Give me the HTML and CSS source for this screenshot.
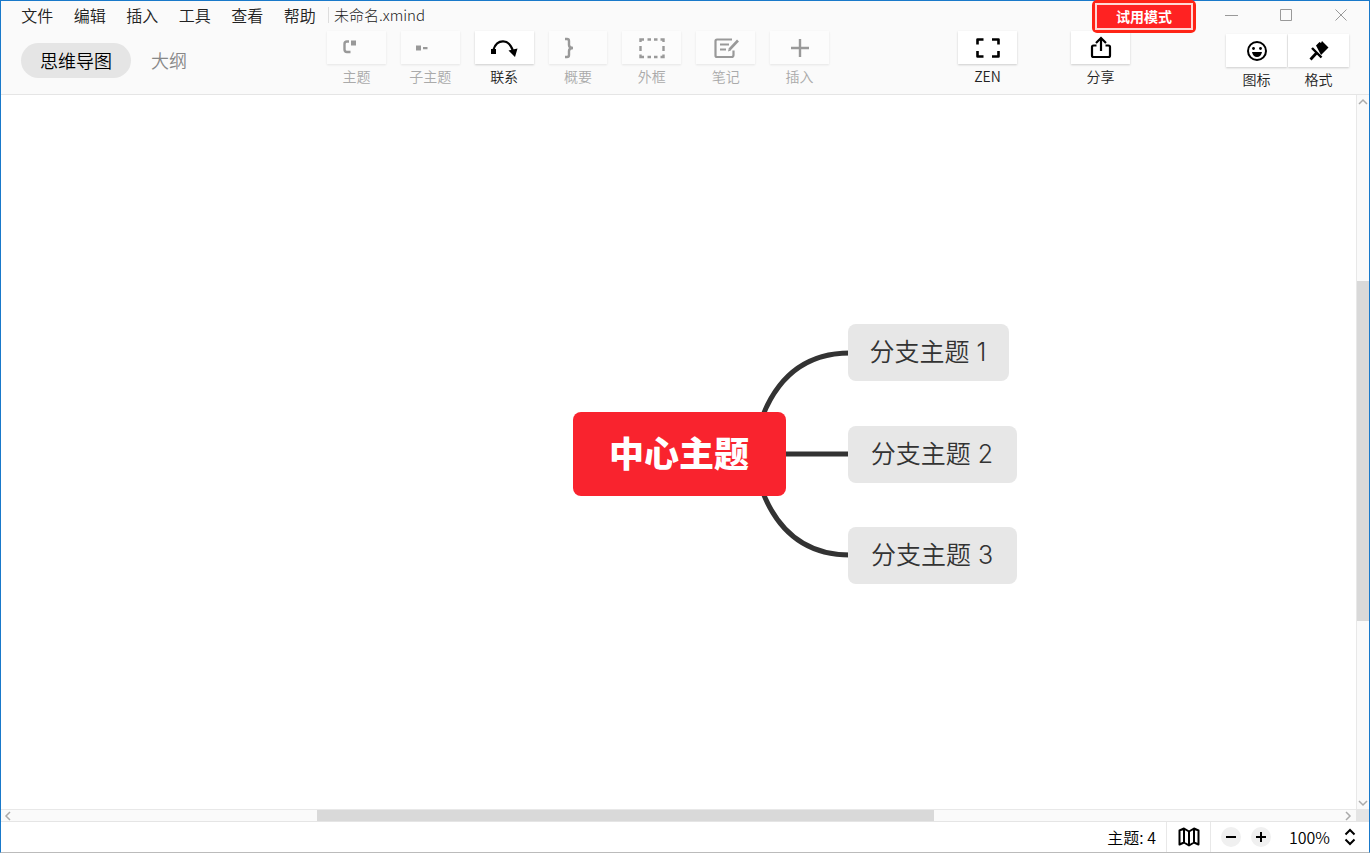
FILE: index.html
```html
<!DOCTYPE html>
<html lang="zh-CN">
<head>
<meta charset="utf-8">
<title>未命名.xmind</title>
<link rel="stylesheet" href="styles.css">
</head>
<body>
<div class="window">
  <header class="header">
    <div class="titlebar">
      <nav class="menu">
        <button>文件</button><button>编辑</button><button>插入</button><button>工具</button><button>查看</button><button>帮助</button>
      </nav>
      <span class="filename">未命名.xmind</span>
      <button class="trial"><span>试用模式</span></button>
      <div class="controls">
        <button aria-label="最小化"><svg width="14" height="14" viewBox="0 0 14 14"><path d="M1 7.500h13"/></svg></button>
        <button aria-label="最大化"><svg width="14" height="14" viewBox="0 0 14 14"><path d="M1.500 1.500h11v11h-11z"/></svg></button>
        <button aria-label="关闭"><svg width="14" height="14" viewBox="0 0 14 14"><path d="M1.500 1.500l11 11M12.500 1.500l-11 11"/></svg></button>
      </div>
    </div>
    <div class="toolbar">
      <div class="tabs">
        <button class="tab active">思维导图</button>
        <button class="tab">大纲</button>
      </div>
      <div class="tools">
        <button class="tool" disabled><span class="face"><svg class="shifted" width="28" height="28" viewBox="0 0 28 28"><path d="M14 7.500h-2q-2.500 0-2.500 2.500v5.500q0 2.500 2.500 2.500h3.500" fill="none" stroke="currentColor" stroke-width="2.400"/><path d="M16 6.500h5v5h-5z" fill="currentColor"/></svg></span>主题</button>
        <button class="tool" disabled><span class="face"><svg class="shifted" width="28" height="28" viewBox="0 0 28 28"><path d="M7 11.500h5v5H7zM14 13h4.500v2.200H14z" fill="currentColor"/></svg></span>子主题</button>
        <button class="tool"><span class="face"><svg width="28" height="28" viewBox="0 0 28 28"><path d="M1 15h5v5H1zM18.500 16.500l9-2-2.500 8.500z" fill="currentColor"/><path d="M3.500 15.500C7 5 19 4 23 17" fill="none" stroke="currentColor" stroke-width="2.200"/></svg></span>联系</button>
        <button class="tool" disabled><span class="face"><svg class="shifted" width="28" height="28" viewBox="0 0 28 28"><path d="M8 5h2q2 0 2 2v4q0 3 4 3-4 0-4 3v4q0 2-2 2H8" fill="none" stroke="currentColor" stroke-width="2.400"/></svg></span>概要</button>
        <button class="tool" disabled><span class="face"><svg width="28" height="28" viewBox="0 0 28 28"><path d="M2.500 8V5.500H6M9.500 5.500h3.500M16 5.500h3.500M22.500 5.500h3V8M25.500 12v5M25.500 20.500V23h-3M19.500 23H16M13 23H9.500M6 23H2.500v-2.500M2.500 17v-5" fill="none" stroke="currentColor" stroke-width="2.400"/></svg></span>外框</button>
        <button class="tool" disabled><span class="face"><svg width="28" height="28" viewBox="0 0 28 28"><path d="M20 5.500H5q-1.500 0-1.500 1.500v14.500Q3.500 23 5 23h14.500q2 0 2-2v-4.500M8 10.500h9M8 15.500h6" fill="none" stroke="currentColor" stroke-width="2.200"/><path d="M17.500 15.500L26 6.500" stroke="currentColor" stroke-width="2.600"/><path d="M16 17.500l.8-3 2 2z" fill="currentColor"/></svg></span>笔记</button>
        <button class="tool" disabled><span class="face"><svg width="28" height="28" viewBox="0 0 28 28"><path d="M14 5v18M5 14h18" stroke="currentColor" stroke-width="2.400"/></svg></span>插入</button>
      </div>
      <div class="actions">
        <button class="tool"><span class="face"><svg width="28" height="28" viewBox="0 0 28 28"><path d="M3.500 10.500V5.500h6M18 5.500h6.500v5M24.500 17v5.500H18M9.500 22.500h-6V17" fill="none" stroke="currentColor" stroke-width="2.600" stroke-linejoin="round"/></svg></span>ZEN</button>
        <button class="tool"><span class="face"><svg width="28" height="28" viewBox="0 0 28 28"><path d="M9.500 11.500h-3q-1.500 0-1.500 1.500v8.500Q5 23 6.500 23h15q1.500 0 1.500-1.500V13q0-1.500-1.500-1.500h-3M14 17V5M9 9l5-5 5 5" fill="none" stroke="currentColor" stroke-width="2.200"/></svg></span>分享</button>
      </div>
      <div class="panels">
        <button class="tool"><span class="face"><svg width="28" height="28" viewBox="0 0 28 28"><circle cx="14" cy="14" r="9" fill="none" stroke="currentColor" stroke-width="2"/><circle cx="10.500" cy="11.500" r="1.400" fill="currentColor"/><circle cx="17.500" cy="11.500" r="1.400" fill="currentColor"/><path d="M9 15h10q-1 5-5 5t-5-5z" fill="currentColor"/></svg></span>图标</button>
        <button class="tool"><span class="face"><svg width="28" height="28" viewBox="0 0 28 28"><path d="M11 8.500l3.500-3.500 1.500 1 1-2 6.500 6.500-7.500 7.500z" fill="currentColor"/><path d="M7 11l9.500 9.500" stroke="currentColor" stroke-width="2.400"/><path d="M11.500 16l-6 6.500" stroke="currentColor" stroke-width="2.800"/></svg></span>格式</button>
      </div>
    </div>
  </header>

  <main class="canvas">
    <div class="map">
      <svg class="links" width="100" height="212" viewBox="0 0 100 212"><path d="M0 106H95M4 78C18 35 45 5 95 5M4 134C18 177 45 207 95 207" fill="none" stroke="#333" stroke-width="5"/></svg>
      <div class="node central">中心主题</div>
      <div class="node branch first">分支主题 1</div>
      <div class="node branch second">分支主题 2</div>
      <div class="node branch third">分支主题 3</div>
    </div>
  </main>
  <div class="scroll vertical">
    <svg width="10" height="12" viewBox="0 0 10 12"><path d="M1 9l4-4 4 4"/></svg>
    <div class="track"><div class="thumb"></div></div>
    <svg width="10" height="12" viewBox="0 0 10 12"><path d="M1 4l4 4 4-4"/></svg>
  </div>
  <div class="scroll horizontal">
    <svg width="14" height="10" viewBox="0 0 14 10"><path d="M9 1L5 5l4 4"/></svg>
    <div class="track"><div class="thumb"></div></div>
    <svg width="14" height="10" viewBox="0 0 14 10"><path d="M4 1l4 4-4 4"/></svg>
  </div>
  <div class="corner"></div>

  <footer class="status">
    <span class="count">主题: 4</span>
    <button class="overview" aria-label="导航图"><svg width="24" height="24" viewBox="0 0 24 24"><path d="M2.500 5.500L7 3.500l5 3 5-3 4.500 2v14L17 17.500l-5 3-5-3-4.500 2zM7 3.500v14M12 6.500v14M17 3.500v14" fill="none" stroke="#000" stroke-width="2" stroke-linejoin="round"/></svg></button>
    <button class="round" aria-label="缩小"><svg width="12" height="12" viewBox="0 0 12 12"><path d="M1 6h10" stroke="#000" stroke-width="2"/></svg></button>
    <button class="round" aria-label="放大"><svg width="12" height="12" viewBox="0 0 12 12"><path d="M1 6h10M6 1v10" stroke="#000" stroke-width="2"/></svg></button>
    <button class="zoom">100%<svg width="12" height="18" viewBox="0 0 12 18"><path d="M1.500 6.500L6 2l4.500 4.500M1.500 11.500L6 16l4.500-4.500" fill="none" stroke="#000" stroke-width="2"/></svg></button>
  </footer>
</div>
</body>
</html>
```
FILE: styles.css
```css
* { box-sizing: border-box; }

body {
  margin: 0;
  font-family: "Noto Sans CJK SC", sans-serif;
  font-weight: 350;
  color: #222;
}

button {
  margin: 0;
  padding: 0;
  border: 0;
  background: none;
  color: inherit;
  font: inherit;
}

svg { display: block; flex: none; }

.window {
  display: grid;
  grid-template-columns: minmax(0, 1fr) 13px;
  grid-template-rows: auto minmax(0, 1fr) 13px auto;
  height: 100vh;
  border: 1px solid #1979ca;
  border-bottom-color: #bbb;
  background: #fff;
}

.header {
  grid-column: 1 / -1;
  background: #fafafa;
  border-bottom: 1px solid #e5e5e5;
}

.titlebar {
  display: flex;
  align-items: center;
  height: 27px;
  padding-right: 21px;
}

.menu {
  display: grid;
  grid-template-columns: repeat(6, 1fr);
  width: 315px;
  margin-left: 10px;
  font-size: 16px;
  line-height: 24px;
}

.filename {
  margin-left: 2px;
  padding-left: 5px;
  border-left: 1px solid #ddd;
  font-size: 15px;
  font-weight: 300;
  line-height: 16px;
}

.trial {
  align-self: flex-start;
  z-index: 1;
  width: 104px;
  height: 33px;
  margin: -1px 0 0 auto;
  padding: 3px;
  border-radius: 5px;
  background: #ff2416;
}

.trial span {
  display: block;
  border: 2px solid #ffd8d4;
  background: #ff2222;
  color: #fff;
  font-size: 14px;
  font-weight: 700;
  line-height: 23px;
}

.controls {
  display: flex;
  gap: 41px;
  margin-left: 28px;
}

.controls svg { fill: none; stroke: #999; }

.toolbar {
  display: flex;
  align-items: flex-start;
  padding: 3px 20px 5px 20px;
}

.tabs {
  display: flex;
  width: 306px;
  padding-top: 12px;
  font-size: 18px;
  line-height: 35px;
}

.tab { color: #888; padding: 0 20px; }

.tab.active {
  width: 110px;
  padding: 0;
  border-radius: 18px;
  background: #e5e5e5;
  color: #000;
}

.tools {
  display: grid;
  grid-template-columns: repeat(7, 1fr);
  gap: 15px;
  width: 502px;
}

.tool {
  display: flex;
  flex-direction: column;
  align-items: center;
  gap: 2px;
  font-size: 14px;
  line-height: 20px;
}

.face {
  display: flex;
  align-items: center;
  justify-content: center;
  width: 100%;
  height: 33px;
  background: #fff;
  color: #000;
  box-shadow: 0 1px 2px #ccc;
}

.tool:disabled { color: #aaa; }

.tool:disabled .face {
  background: #fcfcfc;
  color: #999;
  box-shadow: 0 1px 2px #e5e5e5;
}

.shifted { margin-right: 14px; }

.actions {
  display: flex;
  gap: 54px;
  margin-left: auto;
}

.actions .tool { width: 59px; }

.panels {
  display: flex;
  gap: 1px;
  margin-left: 96px;
  padding-top: 3px;
}

.panels .tool { width: 61px; }

.canvas {
  position: relative;
  overflow: hidden;
}

.map {
  position: absolute;
  left: 50%;
  top: 50%;
}

.links {
  position: absolute;
  left: 76px;
  top: -104px;
}

.node {
  position: absolute;
  border-radius: 8px;
  text-align: center;
  white-space: nowrap;
}

.central {
  left: -106px;
  top: -40px;
  width: 213px;
  height: 84px;
  background: #f9232e;
  color: #fff;
  font-size: 35px;
  font-weight: 900;
  line-height: 80px;
}

.branch {
  left: 169px;
  width: 169px;
  height: 57px;
  background: #e7e7e7;
  color: #333;
  font-family: Inter, "Noto Sans CJK SC", sans-serif;
  font-size: 25px;
  line-height: 57px;
}

.first { top: -128px; width: 161px; }
.second { top: -26px; }
.third { top: 75px; }

.scroll {
  display: flex;
  align-items: center;
  background: #fafafa;
}

.scroll svg { fill: none; stroke: #aaa; stroke-width: 1.5; }

.vertical {
  flex-direction: column;
  border-left: 1px solid #e8e8e8;
}

.horizontal {
  border-top: 1px solid #e8e8e8;
  border-bottom: 1px solid #e5e5e5;
}

.track {
  display: flex;
  flex: 1;
  align-self: stretch;
}

.thumb { background: #d9d9d9; }

.vertical .track { flex-direction: column; }
.vertical .thumb { height: 49.3%; margin-top: 174px; }
.horizontal .thumb { width: 46.5%; margin-left: 302px; }

.corner { background: #e5e5e5; border-bottom: 1px solid #e5e5e5; }

.status {
  grid-column: 1 / -1;
  display: flex;
  align-items: center;
  justify-content: flex-end;
  height: 30px;
  padding-right: 13px;
  color: #000;
  font-size: 16px;
  line-height: 30px;
}

.count { padding-right: 10px; }

.overview {
  display: flex;
  align-items: center;
  justify-content: center;
  width: 45px;
  height: 30px;
  margin-right: 10px;
  border: solid #e8e8e8;
  border-width: 0 1px;
}

.round {
  display: flex;
  align-items: center;
  justify-content: center;
  width: 20px;
  height: 20px;
  margin-right: 10px;
  border-radius: 50%;
  background: #f0f0f0;
}

.zoom {
  display: flex;
  align-items: center;
  gap: 14px;
  margin-left: 8px;
}
```
